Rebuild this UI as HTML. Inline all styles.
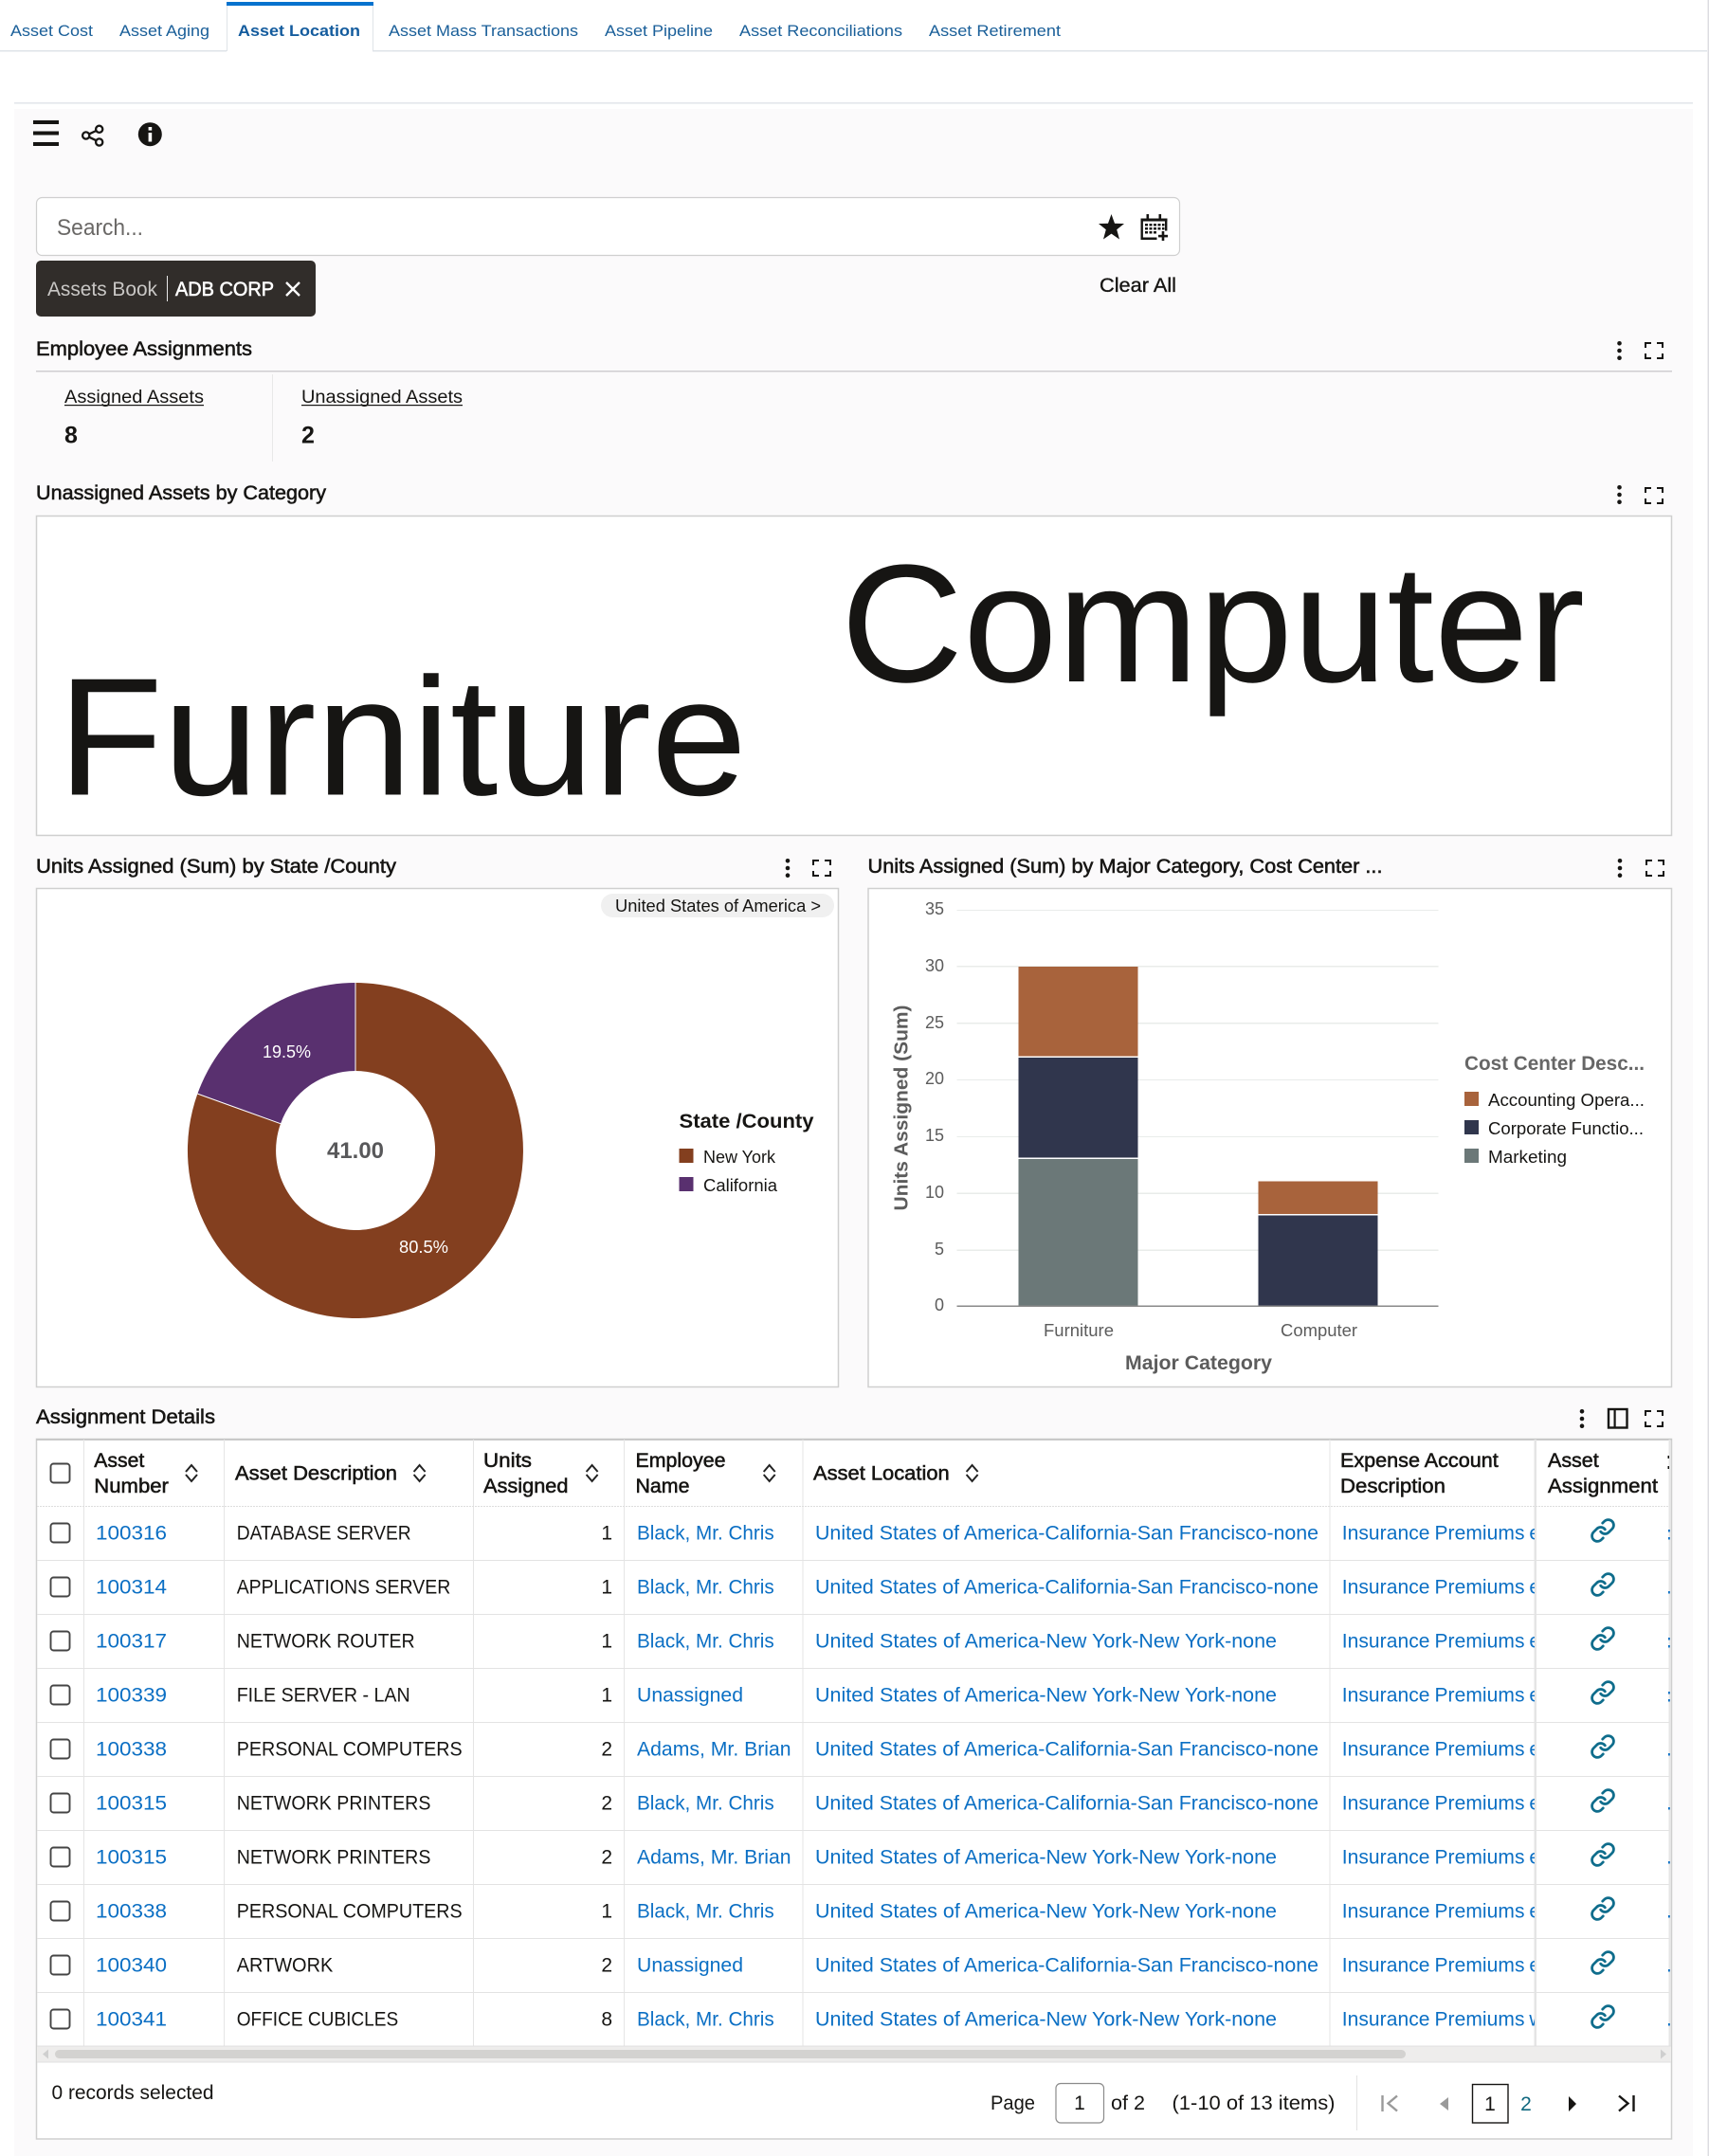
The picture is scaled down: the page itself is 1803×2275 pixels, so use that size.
<!DOCTYPE html>
<html lang="en">
<head>
<meta charset="utf-8">
<title>Asset Location</title>
<style>
html,body{margin:0;padding:0;background:#fff}
svg{display:block}
text{font-family:"Liberation Sans",Arial,sans-serif;fill:#161513;font-size:21px;white-space:pre}
.tab{font-size:17px;fill:#1a5f99}
.sb{stroke:#161513;stroke-width:.55px}
.lk{fill:#0b6fc4}
.ex{fill:#0b6fc4;letter-spacing:.07px;word-spacing:-1px}
.b{font-weight:700}
.s18{font-size:18px}
.s19{font-size:19px}
.g{fill:#5c5c5c}
</style>
</head>
<body>
<svg xmlns="http://www.w3.org/2000/svg" width="1803" height="2275" viewBox="0 0 1803 2275">
<defs>
<g id="keb" fill="#161513"><circle cx="0" cy="2.3" r="2.3"/><circle cx="0" cy="10" r="2.3"/><circle cx="0" cy="17.7" r="2.3"/></g>
<path id="full" d="M0 6V1H6M12 1H18V6M18 12V17H12M6 17H0V12" fill="none" stroke="#161513" stroke-width="2"/>
<path id="sort" d="M-6 7L0 0L6 7M-6 10L0 17L6 10" fill="none" stroke="#222" stroke-width="2"/>
<g id="chain" transform="translate(-13.8,-13.8) scale(1.15)" fill="none" stroke="#0f6d8c" stroke-width="2.4" stroke-linecap="round">
<path d="M10 13a5 5 0 0 0 7.54.54l3-3a5 5 0 0 0-7.07-7.07l-1.72 1.71"/>
<path d="M14 11a5 5 0 0 0-7.54-.54l-3 3a5 5 0 0 0 7.07 7.07l1.71-1.71"/>
</g>
<clipPath id="exp"><rect x="1404" y="1589" width="215" height="570"/></clipPath>
</defs>

<rect width="1803" height="2275" fill="#fff"/>
<rect x="1801.5" y="0" width="1.5" height="2275" fill="#dcdce2"/>

<!-- Tabs -->
<rect x="0" y="53" width="1801" height="1.5" fill="#dfe3e8"/>
<rect x="239" y="5" width="154" height="50" fill="#fff"/>
<rect x="239" y="5" width="1" height="49" fill="#dfe3e8"/>
<rect x="393" y="5" width="1" height="49" fill="#dfe3e8"/>
<rect x="239" y="2" width="155" height="4" fill="#0572ce"/>
<text class="tab" x="11" y="38" textLength="87" lengthAdjust="spacingAndGlyphs">Asset Cost</text>
<text class="tab" x="126" y="38" textLength="95" lengthAdjust="spacingAndGlyphs">Asset Aging</text>
<text class="tab b" x="251" y="38" textLength="129" lengthAdjust="spacingAndGlyphs" style="fill:#145c9e">Asset Location</text>
<text class="tab" x="410" y="38" textLength="200" lengthAdjust="spacingAndGlyphs">Asset Mass Transactions</text>
<text class="tab" x="638" y="38" textLength="114" lengthAdjust="spacingAndGlyphs">Asset Pipeline</text>
<text class="tab" x="780" y="38" textLength="172" lengthAdjust="spacingAndGlyphs">Asset Reconciliations</text>
<text class="tab" x="980" y="38" textLength="139" lengthAdjust="spacingAndGlyphs">Asset Retirement</text>

<!-- Panel -->
<rect x="15" y="108" width="1771" height="1.5" fill="#e1e5ea"/>
<rect x="15" y="115" width="1771" height="2160" fill="#fbfafb"/>

<!-- Toolbar icons -->
<g fill="#161513"><rect x="35" y="127" width="27" height="4"/><rect x="35" y="138.5" width="27" height="4"/><rect x="35" y="150" width="27" height="4"/></g>
<g fill="none" stroke="#161513" stroke-width="2.3">
<circle cx="104.7" cy="136.3" r="3.6"/><circle cx="90.7" cy="143" r="3.6"/><circle cx="104.7" cy="150" r="3.6"/>
<path d="M94 141.4L101.4 138M94 144.7L101.4 148.2"/>
</g>
<circle cx="158.3" cy="141.7" r="12.5" fill="#161513"/>
<rect x="156.6" y="140" width="3.6" height="9.5" fill="#fff"/><rect x="156.6" y="134" width="3.6" height="3.6" fill="#fff"/>

<!-- Search -->
<rect x="38.5" y="208.5" width="1206" height="61" rx="6" fill="#fff" stroke="#cfcfcf" stroke-width="1.2"/>
<text x="60" y="248" textLength="91" lengthAdjust="spacingAndGlyphs" style="font-size:24px;fill:#6a6866">Search...</text>
<path d="M1172.5 226L1176 235.7L1186 236L1178.2 242.3L1181 252.5L1172.5 246.6L1164 252.5L1166.8 242.3L1159 236L1169 235.7Z" fill="#161513"/>
<g fill="#161513">
<rect x="1203.5" y="230.5" width="28" height="3"/><rect x="1203.5" y="230.5" width="2.4" height="22.5"/><rect x="1203.5" y="250.5" width="17" height="2.5"/><rect x="1229" y="230.5" width="2.4" height="13"/>
<rect x="1209.5" y="226" width="2.6" height="7"/><rect x="1222.5" y="226" width="2.6" height="7"/>
<rect x="1208" y="236" width="3" height="2.5"/><rect x="1212.5" y="236" width="3" height="2.5"/><rect x="1217" y="236" width="3" height="2.5"/><rect x="1221.5" y="236" width="3" height="2.5"/><rect x="1226" y="236" width="2.5" height="2.5"/>
<rect x="1208" y="240" width="3" height="2.5"/><rect x="1212.5" y="240" width="3" height="2.5"/><rect x="1217" y="240" width="3" height="2.5"/><rect x="1221.5" y="240" width="3" height="2.5"/><rect x="1226" y="240" width="2.5" height="2.5"/>
<rect x="1208" y="244" width="3" height="2.5"/><rect x="1212.5" y="244" width="3" height="2.5"/><rect x="1217" y="244" width="3" height="2.5"/>
<rect x="1222" y="247.8" width="10" height="2.6"/><rect x="1225.7" y="244" width="2.6" height="10"/>
</g>

<!-- Chip -->
<rect x="38" y="275" width="295" height="59" rx="5" fill="#312d2a"/>
<text x="50" y="312" textLength="116" lengthAdjust="spacingAndGlyphs" style="fill:#c9c7c5">Assets Book</text>
<rect x="176" y="291" width="1" height="27" fill="#e8e8e8"/>
<text x="185" y="312" textLength="104" lengthAdjust="spacingAndGlyphs" style="fill:#fff;stroke:#fff;stroke-width:.6px">ADB CORP</text>
<path d="M302 298L316 312M316 298L302 312" stroke="#fff" stroke-width="2.4" fill="none"/>
<text class="sb" x="1160" y="308" textLength="81" lengthAdjust="spacingAndGlyphs" style="stroke-width:.35px">Clear All</text>

<!-- Employee Assignments -->
<text class="sb" x="38" y="375" textLength="228" lengthAdjust="spacingAndGlyphs">Employee Assignments</text>
<use href="#keb" x="1708.5" y="360"/><use href="#full" x="1736" y="361"/>
<rect x="38" y="391" width="1726" height="1.5" fill="#cfcdd0"/>
<text class="s19" x="68" y="425" textLength="147" lengthAdjust="spacingAndGlyphs">Assigned Assets</text>
<rect x="68" y="427" width="147" height="1.2" fill="#161513"/>
<text class="s19" x="318" y="425" textLength="170" lengthAdjust="spacingAndGlyphs">Unassigned Assets</text>
<rect x="318" y="427" width="170" height="1.2" fill="#161513"/>
<rect x="287" y="395" width="1" height="92" fill="#e8e8e8"/>
<text class="b" x="68" y="467.5" style="font-size:25px">8</text>
<text class="b" x="318" y="467.5" style="font-size:25px">2</text>

<!-- Tag cloud -->
<text class="sb" x="38" y="527" textLength="306" lengthAdjust="spacingAndGlyphs">Unassigned Assets by Category</text>
<use href="#keb" x="1708.5" y="512"/><use href="#full" x="1736" y="514"/>
<rect x="38.5" y="544.5" width="1725" height="337" fill="#fff" stroke="#cfcfcf" stroke-width="1.5"/>
<text x="61" y="838.5" textLength="727" lengthAdjust="spacingAndGlyphs" style="font-size:177px">Furniture</text>
<text x="887" y="719" textLength="785" lengthAdjust="spacingAndGlyphs" style="font-size:177px">Computer</text>

<!-- Donut -->
<text class="sb" x="38" y="921" textLength="380" lengthAdjust="spacingAndGlyphs">Units Assigned (Sum) by State /County</text>
<use href="#keb" x="831" y="906"/><use href="#full" x="858" y="907"/>
<rect x="38.5" y="937.5" width="846" height="526" fill="#fff" stroke="#cfcfcf" stroke-width="1.5"/>
<rect x="634" y="943" width="246" height="25" rx="12.5" fill="#f0f0f0"/>
<text class="s18" x="649" y="962" textLength="217" lengthAdjust="spacingAndGlyphs">United States of America &gt;</text>
<path d="M375 1037A177 177 0 1 1 208.4 1154.1L296 1185.7A84 84 0 1 0 375 1130Z" fill="#833f1f"/>
<path d="M375 1037V1130A84 84 0 0 0 296 1185.7L208.4 1154.1A177 177 0 0 1 375 1037Z" fill="#59306f"/>
<path d="M375 1037V1130M208.4 1154.1L296 1185.7" stroke="#fff" stroke-width="1" fill="none"/>
<text class="s18" x="277" y="1116" textLength="51" lengthAdjust="spacingAndGlyphs" style="fill:#fff">19.5%</text>
<text class="s18" x="421" y="1322" textLength="52" lengthAdjust="spacingAndGlyphs" style="fill:#fff">80.5%</text>
<text class="b" x="345" y="1222" textLength="60" lengthAdjust="spacingAndGlyphs" style="font-size:24px;fill:#58585a">41.00</text>
<text class="b" x="716.5" y="1190" textLength="142" lengthAdjust="spacingAndGlyphs">State /County</text>
<rect x="716.5" y="1212" width="15" height="15" fill="#833f1f"/>
<text class="s18" x="742" y="1227" textLength="76" lengthAdjust="spacingAndGlyphs">New York</text>
<rect x="716.5" y="1242" width="15" height="15" fill="#59306f"/>
<text class="s18" x="742" y="1257" textLength="78" lengthAdjust="spacingAndGlyphs">California</text>

<!-- Bar chart -->
<text class="sb" x="915.5" y="921" textLength="543" lengthAdjust="spacingAndGlyphs">Units Assigned (Sum) by Major Category, Cost Center ...</text>
<use href="#keb" x="1709" y="906"/><use href="#full" x="1737" y="907"/>
<rect x="916" y="937.5" width="847.5" height="526" fill="#fff" stroke="#cfcfcf" stroke-width="1.5"/>
<g fill="#e9ecea">
<rect x="1009.5" y="960" width="508" height="1"/><rect x="1009.5" y="1019" width="508" height="1.5"/><rect x="1009.5" y="1079" width="508" height="1.5"/><rect x="1009.5" y="1139" width="508" height="1"/><rect x="1009.5" y="1199" width="508" height="1"/><rect x="1009.5" y="1258.5" width="508" height="1.5"/><rect x="1009.5" y="1318.5" width="508" height="1.5"/>
</g>
<rect x="1074.5" y="1020" width="126" height="94.5" fill="#a8633c"/>
<rect x="1074.5" y="1116" width="126" height="105.5" fill="#30364d"/>
<rect x="1074.5" y="1223" width="126" height="155" fill="#6b7878"/>
<rect x="1327.5" y="1246.5" width="126" height="34.5" fill="#a8633c"/>
<rect x="1327.5" y="1282.5" width="126" height="95.5" fill="#30364d"/>
<rect x="1009.5" y="1377.5" width="508" height="1.5" fill="#8a8a8a"/>
<text class="s18 g" x="996" y="965" text-anchor="end">35</text>
<text class="s18 g" x="996" y="1025" text-anchor="end">30</text>
<text class="s18 g" x="996" y="1085" text-anchor="end">25</text>
<text class="s18 g" x="996" y="1144" text-anchor="end">20</text>
<text class="s18 g" x="996" y="1204" text-anchor="end">15</text>
<text class="s18 g" x="996" y="1264" text-anchor="end">10</text>
<text class="s18 g" x="996" y="1324" text-anchor="end">5</text>
<text class="s18 g" x="996" y="1383" text-anchor="end">0</text>
<text class="b g" x="957.5" y="1169" transform="rotate(-90 957.5 1169)" text-anchor="middle" textLength="217" lengthAdjust="spacingAndGlyphs" style="font-size:20px">Units Assigned (Sum)</text>
<text class="s18 g" x="1101" y="1410" textLength="74" lengthAdjust="spacingAndGlyphs">Furniture</text>
<text class="s18 g" x="1351" y="1410" textLength="81" lengthAdjust="spacingAndGlyphs">Computer</text>
<text class="b g" x="1187" y="1445" textLength="155" lengthAdjust="spacingAndGlyphs">Major Category</text>
<text class="b" x="1545" y="1129" textLength="190" lengthAdjust="spacingAndGlyphs" style="fill:#666">Cost Center Desc...</text>
<rect x="1545" y="1152" width="15" height="15" fill="#a8633c"/>
<text class="s18" x="1570" y="1167" textLength="165" lengthAdjust="spacingAndGlyphs">Accounting Opera...</text>
<rect x="1545" y="1182" width="15" height="15" fill="#30364d"/>
<text class="s18" x="1570" y="1197" textLength="164" lengthAdjust="spacingAndGlyphs">Corporate Functio...</text>
<rect x="1545" y="1212" width="15" height="15" fill="#6b7878"/>
<text class="s18" x="1570" y="1227" textLength="83" lengthAdjust="spacingAndGlyphs">Marketing</text>

<!-- Table -->
<text class="sb" x="38" y="1502" textLength="189" lengthAdjust="spacingAndGlyphs">Assignment Details</text>
<use href="#keb" x="1669" y="1487"/>
<rect x="1697" y="1487" width="19.5" height="19.5" fill="none" stroke="#161513" stroke-width="2.4"/><rect x="1702.5" y="1487" width="2.2" height="19.5" fill="#161513"/>
<use href="#full" x="1736" y="1488"/>

<rect x="38.5" y="1518.5" width="1725" height="738.5" fill="#fff" stroke="#cfcfcf" stroke-width="1.5"/>
<rect x="38" y="1518" width="1726" height="2" fill="#c9c9c9"/>

<g fill="#e5e5e5">
<rect x="88" y="1519" width="1" height="640"/><rect x="236" y="1519" width="1" height="640"/><rect x="499" y="1519" width="1" height="640"/><rect x="658" y="1519" width="1" height="640"/><rect x="846.5" y="1519" width="1" height="640"/><rect x="1402.5" y="1519" width="1" height="640"/>
<rect x="1618.5" y="1519" width="2.5" height="640"/>
<rect x="1760.5" y="1519" width="2" height="640"/>
</g>
<path d="M39 1589.5H1761" stroke="#ddd" stroke-width="1" stroke-dasharray="2 1" fill="none"/>

<!-- Header -->
<rect x="53.5" y="1544.5" width="20" height="20" rx="3" fill="#fff" stroke="#444" stroke-width="1.9"/>
<text class="sb" x="99.3" y="1548" textLength="53" lengthAdjust="spacingAndGlyphs">Asset</text>
<text class="sb" x="99.3" y="1575" textLength="78.6" lengthAdjust="spacingAndGlyphs">Number</text>
<use href="#sort" x="202" y="1546"/>
<text class="sb" x="248" y="1561.5" textLength="171" lengthAdjust="spacingAndGlyphs">Asset Description</text>
<use href="#sort" x="442.6" y="1546"/>
<text class="sb" x="510" y="1548" textLength="51" lengthAdjust="spacingAndGlyphs">Units</text>
<text class="sb" x="510" y="1575" textLength="89.5" lengthAdjust="spacingAndGlyphs">Assigned</text>
<use href="#sort" x="624.6" y="1546"/>
<text class="sb" x="670.5" y="1548" textLength="95" lengthAdjust="spacingAndGlyphs">Employee</text>
<text class="sb" x="670.5" y="1575" textLength="57" lengthAdjust="spacingAndGlyphs">Name</text>
<use href="#sort" x="811.7" y="1546"/>
<text class="sb" x="858" y="1561.5" textLength="143.7" lengthAdjust="spacingAndGlyphs">Asset Location</text>
<use href="#sort" x="1025.6" y="1546"/>
<text class="sb" x="1414" y="1548" textLength="166.7" lengthAdjust="spacingAndGlyphs">Expense Account</text>
<text class="sb" x="1414" y="1575" textLength="111" lengthAdjust="spacingAndGlyphs">Description</text>
<text class="sb" x="1633" y="1548" textLength="53.7" lengthAdjust="spacingAndGlyphs">Asset</text>
<text class="sb" x="1633" y="1575" textLength="116" lengthAdjust="spacingAndGlyphs">Assignment</text>
<rect x="1759.5" y="1536" width="1.5" height="3" fill="#161513"/><rect x="1759.5" y="1547" width="1.5" height="3" fill="#161513"/>

<!-- Rows -->
<g>
<rect x="39" y="1646" width="1722" height="1" fill="#e3e3e3"/>
<rect x="53.5" y="1607.5" width="20" height="20" rx="3" fill="#fff" stroke="#444" stroke-width="1.9"/>
<text class="lk" x="101" y="1624.5" textLength="75" lengthAdjust="spacingAndGlyphs">100316</text>
<text x="249.7" y="1624.5" textLength="184" lengthAdjust="spacingAndGlyphs">DATABASE SERVER</text>
<text x="646" y="1624.5" text-anchor="end">1</text>
<text class="lk" x="672" y="1624.5" textLength="144.7" lengthAdjust="spacingAndGlyphs">Black, Mr. Chris</text>
<text class="lk" x="860" y="1624.5" textLength="531" lengthAdjust="spacingAndGlyphs">United States of America-California-San Francisco-none</text>
<text class="ex" x="1415.7" y="1624.5" clip-path="url(#exp)">Insurance Premiums expense</text>
<use href="#chain" x="1691" y="1615"/>
<rect x="1760" y="1614" width="1.8" height="2.5" fill="#0b6fc4"/><rect x="1760" y="1622" width="1.8" height="2.5" fill="#0b6fc4"/>
</g>
<g transform="translate(0,57)">
<rect x="39" y="1646" width="1722" height="1" fill="#e3e3e3"/>
<rect x="53.5" y="1607.5" width="20" height="20" rx="3" fill="#fff" stroke="#444" stroke-width="1.9"/>
<text class="lk" x="101" y="1624.5" textLength="75" lengthAdjust="spacingAndGlyphs">100314</text>
<text x="249.7" y="1624.5" textLength="225.6" lengthAdjust="spacingAndGlyphs">APPLICATIONS SERVER</text>
<text x="646" y="1624.5" text-anchor="end">1</text>
<text class="lk" x="672" y="1624.5" textLength="144.7" lengthAdjust="spacingAndGlyphs">Black, Mr. Chris</text>
<text class="lk" x="860" y="1624.5" textLength="531" lengthAdjust="spacingAndGlyphs">United States of America-California-San Francisco-none</text>
<text class="ex" x="1415.7" y="1624.5" clip-path="url(#exp)">Insurance Premiums expense</text>
<use href="#chain" x="1691" y="1615"/>
<rect x="1760" y="1622" width="1.8" height="2.5" fill="#0b6fc4"/>
</g>
<g transform="translate(0,114)">
<rect x="39" y="1646" width="1722" height="1" fill="#e3e3e3"/>
<rect x="53.5" y="1607.5" width="20" height="20" rx="3" fill="#fff" stroke="#444" stroke-width="1.9"/>
<text class="lk" x="101" y="1624.5" textLength="75" lengthAdjust="spacingAndGlyphs">100317</text>
<text x="249.7" y="1624.5" textLength="188" lengthAdjust="spacingAndGlyphs">NETWORK ROUTER</text>
<text x="646" y="1624.5" text-anchor="end">1</text>
<text class="lk" x="672" y="1624.5" textLength="144.7" lengthAdjust="spacingAndGlyphs">Black, Mr. Chris</text>
<text class="lk" x="860" y="1624.5" textLength="487" lengthAdjust="spacingAndGlyphs">United States of America-New York-New York-none</text>
<text class="ex" x="1415.7" y="1624.5" clip-path="url(#exp)">Insurance Premiums expense</text>
<use href="#chain" x="1691" y="1615"/>
<rect x="1760" y="1614" width="1.8" height="2.5" fill="#0b6fc4"/><rect x="1760" y="1622" width="1.8" height="2.5" fill="#0b6fc4"/>
</g>
<g transform="translate(0,171)">
<rect x="39" y="1646" width="1722" height="1" fill="#e3e3e3"/>
<rect x="53.5" y="1607.5" width="20" height="20" rx="3" fill="#fff" stroke="#444" stroke-width="1.9"/>
<text class="lk" x="101" y="1624.5" textLength="75" lengthAdjust="spacingAndGlyphs">100339</text>
<text x="249.7" y="1624.5" textLength="183" lengthAdjust="spacingAndGlyphs">FILE SERVER - LAN</text>
<text x="646" y="1624.5" text-anchor="end">1</text>
<text class="lk" x="672" y="1624.5" textLength="112" lengthAdjust="spacingAndGlyphs">Unassigned</text>
<text class="lk" x="860" y="1624.5" textLength="487" lengthAdjust="spacingAndGlyphs">United States of America-New York-New York-none</text>
<text class="ex" x="1415.7" y="1624.5" clip-path="url(#exp)">Insurance Premiums expense</text>
<use href="#chain" x="1691" y="1615"/>
<rect x="1760" y="1614" width="1.8" height="2.5" fill="#0b6fc4"/><rect x="1760" y="1622" width="1.8" height="2.5" fill="#0b6fc4"/>
</g>
<g transform="translate(0,228)">
<rect x="39" y="1646" width="1722" height="1" fill="#e3e3e3"/>
<rect x="53.5" y="1607.5" width="20" height="20" rx="3" fill="#fff" stroke="#444" stroke-width="1.9"/>
<text class="lk" x="101" y="1624.5" textLength="75" lengthAdjust="spacingAndGlyphs">100338</text>
<text x="249.7" y="1624.5" textLength="238" lengthAdjust="spacingAndGlyphs">PERSONAL COMPUTERS</text>
<text x="646" y="1624.5" text-anchor="end">2</text>
<text class="lk" x="672" y="1624.5" textLength="162.6" lengthAdjust="spacingAndGlyphs">Adams, Mr. Brian</text>
<text class="lk" x="860" y="1624.5" textLength="531" lengthAdjust="spacingAndGlyphs">United States of America-California-San Francisco-none</text>
<text class="ex" x="1415.7" y="1624.5" clip-path="url(#exp)">Insurance Premiums expense</text>
<use href="#chain" x="1691" y="1615"/>
<rect x="1760" y="1622" width="1.8" height="2.5" fill="#0b6fc4"/>
</g>
<g transform="translate(0,285)">
<rect x="39" y="1646" width="1722" height="1" fill="#e3e3e3"/>
<rect x="53.5" y="1607.5" width="20" height="20" rx="3" fill="#fff" stroke="#444" stroke-width="1.9"/>
<text class="lk" x="101" y="1624.5" textLength="75" lengthAdjust="spacingAndGlyphs">100315</text>
<text x="249.7" y="1624.5" textLength="204.7" lengthAdjust="spacingAndGlyphs">NETWORK PRINTERS</text>
<text x="646" y="1624.5" text-anchor="end">2</text>
<text class="lk" x="672" y="1624.5" textLength="144.7" lengthAdjust="spacingAndGlyphs">Black, Mr. Chris</text>
<text class="lk" x="860" y="1624.5" textLength="531" lengthAdjust="spacingAndGlyphs">United States of America-California-San Francisco-none</text>
<text class="ex" x="1415.7" y="1624.5" clip-path="url(#exp)">Insurance Premiums expense</text>
<use href="#chain" x="1691" y="1615"/>
<rect x="1760" y="1622" width="1.8" height="2.5" fill="#0b6fc4"/>
</g>
<g transform="translate(0,342)">
<rect x="39" y="1646" width="1722" height="1" fill="#e3e3e3"/>
<rect x="53.5" y="1607.5" width="20" height="20" rx="3" fill="#fff" stroke="#444" stroke-width="1.9"/>
<text class="lk" x="101" y="1624.5" textLength="75" lengthAdjust="spacingAndGlyphs">100315</text>
<text x="249.7" y="1624.5" textLength="204.7" lengthAdjust="spacingAndGlyphs">NETWORK PRINTERS</text>
<text x="646" y="1624.5" text-anchor="end">2</text>
<text class="lk" x="672" y="1624.5" textLength="162.6" lengthAdjust="spacingAndGlyphs">Adams, Mr. Brian</text>
<text class="lk" x="860" y="1624.5" textLength="487" lengthAdjust="spacingAndGlyphs">United States of America-New York-New York-none</text>
<text class="ex" x="1415.7" y="1624.5" clip-path="url(#exp)">Insurance Premiums expense</text>
<use href="#chain" x="1691" y="1615"/>
<rect x="1760" y="1622" width="1.8" height="2.5" fill="#0b6fc4"/>
</g>
<g transform="translate(0,399)">
<rect x="39" y="1646" width="1722" height="1" fill="#e3e3e3"/>
<rect x="53.5" y="1607.5" width="20" height="20" rx="3" fill="#fff" stroke="#444" stroke-width="1.9"/>
<text class="lk" x="101" y="1624.5" textLength="75" lengthAdjust="spacingAndGlyphs">100338</text>
<text x="249.7" y="1624.5" textLength="238" lengthAdjust="spacingAndGlyphs">PERSONAL COMPUTERS</text>
<text x="646" y="1624.5" text-anchor="end">1</text>
<text class="lk" x="672" y="1624.5" textLength="144.7" lengthAdjust="spacingAndGlyphs">Black, Mr. Chris</text>
<text class="lk" x="860" y="1624.5" textLength="487" lengthAdjust="spacingAndGlyphs">United States of America-New York-New York-none</text>
<text class="ex" x="1415.7" y="1624.5" clip-path="url(#exp)">Insurance Premiums expense</text>
<use href="#chain" x="1691" y="1615"/>
<rect x="1760" y="1622" width="1.8" height="2.5" fill="#0b6fc4"/>
</g>
<g transform="translate(0,456)">
<rect x="39" y="1646" width="1722" height="1" fill="#e3e3e3"/>
<rect x="53.5" y="1607.5" width="20" height="20" rx="3" fill="#fff" stroke="#444" stroke-width="1.9"/>
<text class="lk" x="101" y="1624.5" textLength="75" lengthAdjust="spacingAndGlyphs">100340</text>
<text x="249.7" y="1624.5" textLength="101.6" lengthAdjust="spacingAndGlyphs">ARTWORK</text>
<text x="646" y="1624.5" text-anchor="end">2</text>
<text class="lk" x="672" y="1624.5" textLength="112" lengthAdjust="spacingAndGlyphs">Unassigned</text>
<text class="lk" x="860" y="1624.5" textLength="531" lengthAdjust="spacingAndGlyphs">United States of America-California-San Francisco-none</text>
<text class="ex" x="1415.7" y="1624.5" clip-path="url(#exp)">Insurance Premiums expense</text>
<use href="#chain" x="1691" y="1615"/>
<rect x="1760" y="1622" width="1.8" height="2.5" fill="#0b6fc4"/>
</g>
<g transform="translate(0,513)">
<rect x="53.5" y="1607.5" width="20" height="20" rx="3" fill="#fff" stroke="#444" stroke-width="1.9"/>
<text class="lk" x="101" y="1624.5" textLength="75" lengthAdjust="spacingAndGlyphs">100341</text>
<text x="249.7" y="1624.5" textLength="170.5" lengthAdjust="spacingAndGlyphs">OFFICE CUBICLES</text>
<text x="646" y="1624.5" text-anchor="end">8</text>
<text class="lk" x="672" y="1624.5" textLength="144.7" lengthAdjust="spacingAndGlyphs">Black, Mr. Chris</text>
<text class="lk" x="860" y="1624.5" textLength="487" lengthAdjust="spacingAndGlyphs">United States of America-New York-New York-none</text>
<text class="ex" x="1415.7" y="1624.5" clip-path="url(#exp)">Insurance Premiums workers</text>
<use href="#chain" x="1691" y="1615"/>
<rect x="1760" y="1622" width="1.8" height="2.5" fill="#0b6fc4"/>
</g>

<!-- Scrollbar -->
<rect x="39" y="2159" width="1724" height="17" fill="#eeedec"/>
<rect x="39" y="2158.5" width="1724" height="1" fill="#e0e0e0"/>
<rect x="39" y="2175.5" width="1724" height="1" fill="#e0e0e0"/>
<rect x="58" y="2163" width="1425" height="9" rx="4.5" fill="#d3d2d0"/>
<path d="M51 2162.5L45 2167.5L51 2172.5Z" fill="#cfcfcf"/>
<path d="M1752 2162.5L1758 2167.5L1752 2172.5Z" fill="#cfcfcf"/>

<!-- Footer -->
<text x="54.5" y="2215" textLength="171" lengthAdjust="spacingAndGlyphs">0 records selected</text>
<text x="1045" y="2226" textLength="47" lengthAdjust="spacingAndGlyphs">Page</text>
<rect x="1114" y="2198.5" width="50.5" height="41.5" rx="5" fill="#fff" stroke="#8b8b8b" stroke-width="1.2"/>
<text x="1139" y="2226" text-anchor="middle">1</text>
<text x="1172" y="2226" textLength="36" lengthAdjust="spacingAndGlyphs">of 2</text>
<text x="1236.5" y="2226" textLength="172" lengthAdjust="spacingAndGlyphs">(1-10 of 13 items)</text>
<rect x="1431" y="2190" width="1" height="58" fill="#e2e2e2"/>
<path d="M1458.5 2211V2228M1474 2211.5L1464.5 2219.5L1474 2227.5" fill="none" stroke="#9a9a9a" stroke-width="2.4"/>
<path d="M1528 2213L1519 2220L1528 2227Z" fill="#9a9a9a"/>
<rect x="1553.5" y="2199.5" width="37.5" height="40.5" fill="#fff" stroke="#161513" stroke-width="1.4"/>
<text x="1572" y="2227" text-anchor="middle">1</text>
<text x="1610" y="2227" text-anchor="middle" style="fill:#10687f">2</text>
<path d="M1655 2212L1663 2220L1655 2228Z" fill="#161513"/>
<path d="M1708 2211.5L1717.5 2219.5L1708 2227.5M1723.5 2211V2228" fill="none" stroke="#161513" stroke-width="2.4"/>
</svg>
</body>
</html>
